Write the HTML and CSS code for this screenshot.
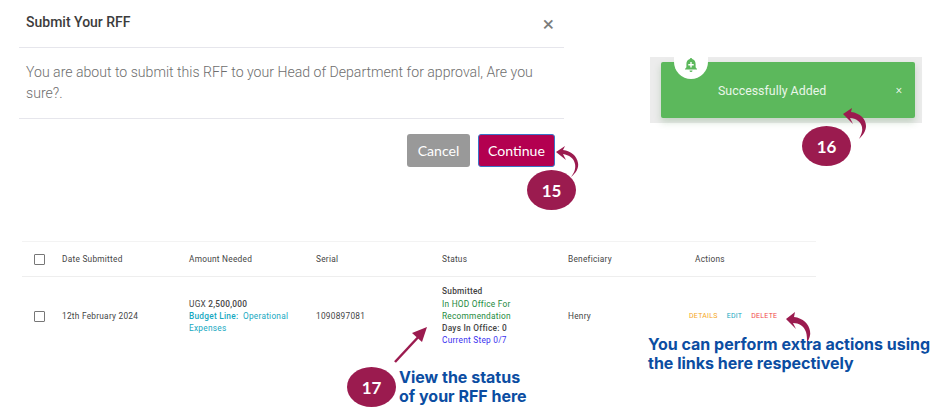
FILE: index.html
```html
<!DOCTYPE html>
<html lang="en">
<head>
<meta charset="utf-8">
<title>Submit Your RFF</title>
<link rel="stylesheet" href="styles.css">
</head>
<body>
<main class="canvas">
  <div class="top">
    <section class="dialog">
      <header class="dialog-head">
        <h2 class="dialog-title">Submit Your RFF</h2>
        <span class="dialog-close">×</span>
      </header>
      <p class="dialog-body">You are about to submit this RFF to your Head of Department for approval, Are you sure?.</p>
      <div class="dialog-foot">
        <button class="btn btn-cancel">Cancel</button>
        <button class="btn btn-continue">Continue</button>
      </div>
    </section>
    <div class="toast-frame">
      <div class="toast">
        <span class="toast-text">Successfully Added</span>
        <span class="toast-close">×</span>
      </div>
      <span class="toast-icon">
        <svg width="16" height="16" viewBox="0 0 16 16"><path fill="#5cb85c" d="M8 1a1.2 1.2 0 0 1 1.2 1.1C11.4 2.7 12.600 4.500 12.600 7v3.200L14 12v.6H2V12l1.400-1.800V7c0-2.500 1.200-4.300 3.400-4.900A1.200 1.200 0 0 1 8 1zM6.500 13.400h3a1.500 1.500 0 0 1-3 0z"/><path fill="#fff" d="M7.300 5h1.400v2h2v1.400h-2v2H7.300v-2h-2V7h2z"/></svg>
      </span>
    </div>
  </div>

  <section class="table">
    <div class="row row-head">
      <span class="check"></span>
      <span>Date Submitted</span>
      <span>Amount Needed</span>
      <span>Serial</span>
      <span>Status</span>
      <span>Beneficiary</span>
      <span>Actions</span>
    </div>
    <div class="row row-body">
      <span class="check"></span>
      <span>12th February 2024</span>
      <div class="cell-lines">
        <div>UGX <b>2,500,000</b></div>
        <div class="teal"><b>Budget Line:</b>&nbsp; Operational Expenses</div>
      </div>
      <span>1090897081</span>
      <div class="cell-lines">
        <div><b>Submitted</b></div>
        <div class="green">In HOD Office For Recommendation</div>
        <div><b>Days In Office: 0</b></div>
        <div class="blue">Current Step 0/7</div>
      </div>
      <span>Henry</span>
      <div class="actions">
        <span class="orange">DETAILS</span>
        <span class="teal">EDIT</span>
        <span class="red">DELETE</span>
      </div>
    </div>
  </section>

  <svg class="arrows" width="938" height="415" viewBox="0 0 938 415">
    <g fill="#9b1b4f">
      <path d="M556 152l9-6-2 4c8 1 14 6 15 13 1 5-2 10-7 14 3-4 5-8 4-13-1-6-6-9-12-10l3 6z"/>
      <path d="M843 114l9-6-1 4c9 1 15 7 15 14 0 5-3 9-7 13 2-4 4-8 3-12-1-5-6-9-12-9l3 6z"/>
      <path d="M786 319l9-7-1 5c9 1 15 7 16 14 1 4-1 8-3 12 0-4 0-8-1-11-2-6-7-9-13-9l3 6z"/>
    </g>
    <path d="M395 362l27-29" stroke="#9b1b4f" stroke-width="2.500" fill="none"/>
    <path d="M427 327l-15 6 10 9z" fill="#9b1b4f"/>
  </svg>

  <span class="badge badge-15">15</span>
  <span class="badge badge-16">16</span>
  <span class="badge badge-17">17</span>
  <p class="note note-status">View the status<br>of your RFF here</p>
  <p class="note note-actions">You can perform extra actions using<br>the links here respectively</p>
</main>
</body>
</html>
```
FILE: styles.css
```css
* { box-sizing: border-box; }
html, body { margin: 0; padding: 0; background: #fff; }
body { font-family: Roboto, sans-serif; }

.canvas { position: relative; width: 938px; height: 415px; overflow: hidden; }

.top { display: flex; align-items: flex-start; padding-left: 19px; gap: 86px; height: 241px; }

.dialog { width: 545px; }
.dialog-head {
  display: flex; justify-content: space-between; align-items: center;
  height: 48px; padding: 0 10px 2px 7px; border-bottom: 1px solid #e6e6ec;
}
.dialog-title { margin: 0 0 2px; font-size: 14px; font-weight: 500; color: #3c3c3c; }
.dialog-close { font-size: 21px; line-height: 1; color: #7b7b7b; margin-top: 4px; }
.dialog-body {
  margin: 0; height: 71px; padding: 14px 20px 0 7px;
  font-size: 14.100px; font-weight: 300; line-height: 21px; color: #6e6e6e;
  border-bottom: 1px solid #e6e6ec;
}
.dialog-foot { display: flex; justify-content: flex-end; gap: 8px; padding: 15px 9px 0 0; }
.btn {
  height: 33px; border-radius: 3px; font-family: Lato, sans-serif; font-size: 14.100px;
  color: #fff; padding: 0; border: 1px solid transparent;
}
.btn-cancel { width: 63px; background: #999; }
.btn-continue { width: 77px; background: #b30050; border-color: #3a76c8; }

.toast-frame { position: relative; margin-top: 57px; width: 272px; height: 66px; background: #ececec; padding: 5px 7px 5px 11px; }
.toast {
  display: flex; align-items: center; height: 56px; background: #5cb85c; border-radius: 2px;
  color: #fff; font-size: 12.400px; box-shadow: 0 4px 7px rgba(70, 130, 70, .25);
}
.toast-text { margin-left: 57px; flex: 1; color: #e9f6e9; }
.toast-close { margin-right: 13px; font-size: 12px; font-weight: 300; }
.toast-icon {
  position: absolute; left: 24px; top: 0; width: 34px; height: 22px; background: #fff;
  border-radius: 0 0 17px 17px; display: flex; align-items: flex-start; justify-content: center;
}

.table {
  margin-left: 22px; width: 794px; border-top: 1px solid #f3f3f3;
  font-size: 8.300px; color: #444; letter-spacing: .25px;
}
.row { display: grid; grid-template-columns: 40px 127px 127px 126px 126px 127px 1fr; align-items: center; }
.row > :first-child { margin-left: 12px; }
.row-head { height: 35px; border-bottom: 1px solid #eee; }
.row-body { height: 79px; padding-bottom: 1px; }
.check { width: 11px; height: 11px; border: 1.500px solid #777; border-radius: 1px; }
.cell-lines { line-height: 12.200px; max-width: 104px; }
.cell-lines b { font-weight: 500; }
.teal { color: #17a8bf; }
.green { color: #1c8a3c; }
.blue { color: #3a2ff0; }
.orange { color: #f5a623; }
.red { color: #f0484a; }
.actions { display: flex; gap: 9px; font-size: 7px; margin-left: -6px; }

.arrows { position: absolute; left: 0; top: 0; pointer-events: none; }

.badge {
  position: absolute; width: 49px; height: 40px; border-radius: 50%; background: #9b1b4f;
  color: #fff; font: 700 17px Lato, sans-serif; display: flex; align-items: center; justify-content: center;
}
.badge-15 { left: 527px; top: 170px; }
.badge-16 { left: 802px; top: 126px; }
.badge-17 { left: 347px; top: 367px; }

.note {
  position: absolute; margin: 0; font: 700 16px/19px Inter, sans-serif; color: #0b4da2;
}
.note-status { left: 399px; top: 368px; }
.note-actions { left: 648px; top: 335px; line-height: 18.500px; }
```
